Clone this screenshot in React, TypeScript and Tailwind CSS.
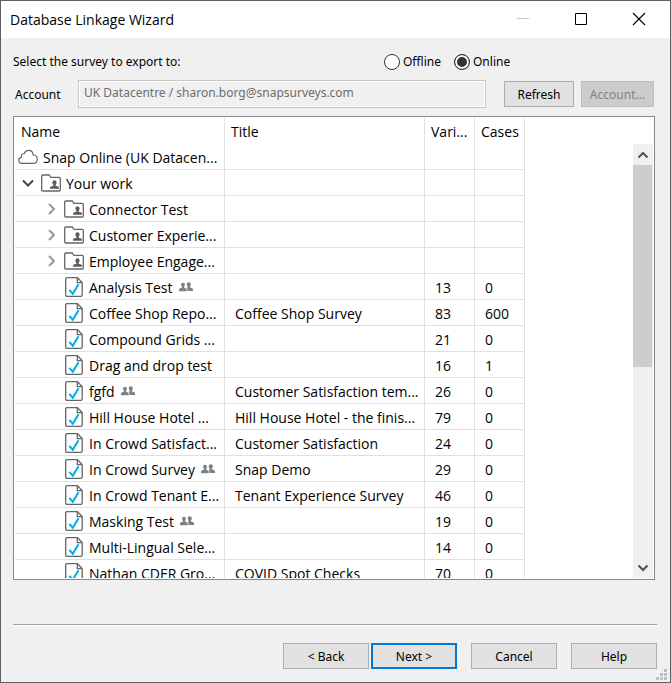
import React, { useState } from "react";

type Kind = "cloud" | "folder" | "survey";

interface Row {
  kind: Kind;
  level: 0 | 1 | 2;
  name: string;
  open?: boolean;
  shared?: boolean;
  title?: string;
  variables?: number;
  cases?: number;
}

const rows: Row[] = [
  { kind: "cloud", level: 0, name: "Snap Online (UK Datacen..." },
  { kind: "folder", level: 1, name: "Your work", open: true },
  { kind: "folder", level: 2, name: "Connector Test" },
  { kind: "folder", level: 2, name: "Customer Experie..." },
  { kind: "folder", level: 2, name: "Employee Engage..." },
  { kind: "survey", level: 2, name: "Analysis Test", shared: true, variables: 13, cases: 0 },
  { kind: "survey", level: 2, name: "Coffee Shop Repo...", title: "Coffee Shop Survey", variables: 83, cases: 600 },
  { kind: "survey", level: 2, name: "Compound Grids ...", variables: 21, cases: 0 },
  { kind: "survey", level: 2, name: "Drag and drop test", variables: 16, cases: 1 },
  { kind: "survey", level: 2, name: "fgfd", shared: true, title: "Customer Satisfaction tem...", variables: 26, cases: 0 },
  { kind: "survey", level: 2, name: "Hill House Hotel ...", title: "Hill House Hotel - the finis...", variables: 79, cases: 0 },
  { kind: "survey", level: 2, name: "In Crowd Satisfact...", title: "Customer Satisfaction", variables: 24, cases: 0 },
  { kind: "survey", level: 2, name: "In Crowd Survey", shared: true, title: "Snap Demo", variables: 29, cases: 0 },
  { kind: "survey", level: 2, name: "In Crowd Tenant E...", title: "Tenant Experience Survey", variables: 46, cases: 0 },
  { kind: "survey", level: 2, name: "Masking Test", shared: true, variables: 19, cases: 0 },
  { kind: "survey", level: 2, name: "Multi-Lingual Sele...", variables: 14, cases: 0 },
  { kind: "survey", level: 2, name: "Nathan CDER Gro...", title: "COVID Spot Checks", variables: 70, cases: 0 },
];

function CloudIcon() {
  return (
    <svg width="20" height="16" viewBox="0 0 20 16" fill="none" stroke="#666" strokeWidth="1.2" className="shrink-0">
      <path d="M4.2 14.4C2 14.4.7 13 .7 11.3c0-1.600 1.200-2.800 2.700-3C3 5.900 4.500 4.300 6.300 4.500 7 2.500 8.600 1.300 10.500 1.300c2.600 0 4.500 1.900 4.600 4.700 2.500.1 4.200 1.900 4.200 4.200 0 2.400-1.800 4.200-4.200 4.200z" />
    </svg>
  );
}

function FolderIcon() {
  return (
    <svg width="20" height="18" viewBox="0 0 20 18" className="shrink-0">
      <path d="M.7 15.800V2.200Q.7 1 1.900 1h6.400l1.500 2.300h8.300q1.200 0 1.200 1.200v11.300q0 1.200-1.200 1.200H1.900Q.7 17 .7 15.800z" fill="#fff" stroke="#666" strokeWidth="1.3" />
      <path d="M13.500 6.300c1.300 0 2.100 1 2.100 2.300 0 1-.4 1.800-1 2.300v.9l2.500.8c.6.2.9.6.9 1.200v1H9v-1c0-.6.3-1 .9-1.200l2.500-.8v-.9c-.6-.5-1-1.300-1-2.300 0-1.300.8-2.300 2.100-2.300z" fill="#5c5c5c" />
    </svg>
  );
}

function SurveyIcon() {
  return (
    <svg width="18" height="20" viewBox="0 0 18 20" fill="none" className="shrink-0">
      <path d="M2 .7h10.500l4.700 4.800V18q0 1.300-1.300 1.300H2Q.7 19.300.7 18V2Q.7.7 2 .7z" fill="#fff" stroke="#666" strokeWidth="1.300" />
      <path d="M12.300 1v4.700H17" stroke="#666" strokeWidth="1.300" />
      <path d="M4.300 12.800l3.500 4 5.700-9.600" stroke="#00aee6" strokeWidth="2" />
    </svg>
  );
}

function PeopleIcon() {
  return (
    <svg width="14" height="10" viewBox="0 0 14 10" fill="#7b8286" className="shrink-0">
      <path d="M9.800.3c1.300 0 2 .9 2 2.100 0 .9-.4 1.700-1 2.100v.8l2.400.9c.5.200.8.600.8 1.100V9H8.400V7.300c0-.6-.3-1-.9-1.400l1.300-.6v-.8c-.6-.4-1-1.200-1-2.100 0-1.200.7-2.100 2-2.100z" />
      <path d="M4 .8c1.200 0 1.900.9 1.900 2 0 .9-.4 1.600-.9 2v.8l2 .8c.5.200.7.500.7 1V9.300H0V7.400c0-.5.300-.8.800-1L3 5.600v-.8c-.6-.4-.9-1.100-.9-2C2.100 1.700 2.800.8 4 .8z" />
    </svg>
  );
}

function Chevron({ d }: { d: string }) {
  return (
    <svg width="12" height="12" viewBox="0 0 12 12" fill="none" stroke="currentColor" strokeWidth="2" className="block">
      <path d={d} />
    </svg>
  );
}

function NameCell({ row }: { row: Row }) {
  const indent = row.level === 0 ? "pl-[3px]" : row.level === 1 ? "pl-[7px]" : "pl-[30px]";
  return (
    <div className={`flex h-[25px] items-center whitespace-nowrap ${indent}`}>
      {row.kind === "folder" && (
        <button
          type="button"
          aria-label={`${row.open ? "Collapse" : "Expand"} ${row.name}`}
          className={row.open ? "mr-[7px] text-[#444]" : "mr-[7px] text-[#999]"}
        >
          <Chevron d={row.open ? "M1 3.500l5 5 5-5" : "M4 1l5 5-5 5"} />
        </button>
      )}
      {row.kind === "survey" && <span className="w-5 shrink-0" />}
      {row.kind === "cloud" && <CloudIcon />}
      {row.kind === "folder" && <FolderIcon />}
      {row.kind === "survey" && <SurveyIcon />}
      <span className={row.kind === "survey" ? "pt-0.5 pl-1.5" : "pt-0.5 pl-[5px]"}>{row.name}</span>
      {row.shared && (
        <span className="pl-1.5">
          <PeopleIcon />
        </span>
      )}
    </div>
  );
}

const header = "h-[26px] border-r border-[#e0e0e0] p-0 pt-0.5 pl-1.5 text-left font-normal whitespace-nowrap";
const cell = "h-[26px] border-r border-b border-[#e0e0e0] p-0 pt-0.5 pl-2.5 whitespace-nowrap";
const button = "h-[26px] border border-[#adadad] bg-[#e1e1e1] pt-0.5 text-center";

export default function App() {
  const [mode, setMode] = useState<"offline" | "online">("online");
  const radio =
    "size-4 appearance-none rounded-full border border-[#333] bg-white checked:bg-[#333] checked:shadow-[inset_0_0_0_2px_white]";

  return (
    <div className="flex h-screen flex-col border border-[#5f5f5f] bg-[#f0f0f0] font-['Noto_Sans',sans-serif] text-[12px] leading-4 text-black">
      <header className="flex h-[37px] shrink-0 items-center justify-between bg-white pl-[9px]">
        <h1 className="font-['Open_Sans',sans-serif] text-[14px] leading-5">Database Linkage Wizard</h1>
        <div className="flex h-full items-center gap-[34px] pr-[19px] pb-0.5">
          <button type="button" aria-label="Minimize" disabled className="size-6">
            <svg width="24" height="24" viewBox="0 0 24 24" className="block">
              <path d="M6 11.500h12" stroke="#c8c8c8" />
            </svg>
          </button>
          <button type="button" aria-label="Maximize" className="size-6">
            <svg width="24" height="24" viewBox="0 0 24 24" className="block">
              <path d="M6.500 6.500h11v11h-11z" stroke="#000" fill="none" />
            </svg>
          </button>
          <button type="button" aria-label="Close" className="size-6">
            <svg width="24" height="24" viewBox="0 0 24 24" className="block">
              <path d="M6 6l12 12M18 6L6 18" stroke="#000" strokeWidth="1.100" />
            </svg>
          </button>
        </div>
      </header>

      <main className="flex min-h-0 flex-1 flex-col pr-[15px] pl-3">
        <fieldset className="shrink-0">
          <div className="flex h-[42px] items-center pt-1.5">
            <div className="w-[371px]">Select the survey to export to:</div>
            <label className="flex w-[70px] items-center gap-[3px]">
              <input type="radio" name="mode" className={radio} checked={mode === "offline"} onChange={() => setMode("offline")} />
              Offline
            </label>
            <label className="flex items-center gap-[3px]">
              <input type="radio" name="mode" className={radio} checked={mode === "online"} onChange={() => setMode("online")} />
              Online
            </label>
          </div>
        </fieldset>

        <div className="flex h-7 shrink-0 items-center pr-px">
          <label htmlFor="account" className="w-[65px] pt-0.5 pl-0.5">
            Account
          </label>
          <input
            id="account"
            type="text"
            disabled
            defaultValue="UK Datacentre / sharon.borg@snapsurveys.com"
            className="h-7 min-w-0 flex-1 border border-[#c8c8c8] bg-[#f0f0f0] px-[5px] pb-1 text-[#6d6d6d] shadow-[inset_0_0_0_1px_white]"
          />
          <button type="button" className={`${button} ml-[18px] w-[70px]`}>
            Refresh
          </button>
          <button type="button" disabled className="ml-[7px] h-[26px] w-[73px] border border-[#bfbfbf] bg-[#ccc] pt-0.5 text-center text-[#838383]">
            Account...
          </button>
        </div>

        <div className="mt-2 flex min-h-0 flex-1 border border-[#828790] bg-white p-px font-['Open_Sans',sans-serif] text-[14px] leading-5">
          <div className="min-w-0 flex-1 overflow-hidden">
            <table className="w-[510px] table-fixed border-separate border-spacing-0">
              <colgroup>
                <col className="w-[210px]" />
                <col className="w-[200px]" />
                <col className="w-[50px]" />
                <col className="w-[50px]" />
              </colgroup>
              <thead>
                <tr>
                  <th className={header}>Name</th>
                  <th className={header}>Title</th>
                  <th className={header}>Vari...</th>
                  <th className={header}>Cases</th>
                </tr>
              </thead>
              <tbody>
                {rows.map((row) => (
                  <tr key={row.name}>
                    <td className="h-[26px] border-r border-b border-[#e0e0e0] p-0">
                      <NameCell row={row} />
                    </td>
                    <td className={cell}>{row.title}</td>
                    <td className={cell}>{row.variables}</td>
                    <td className={cell}>{row.cases}</td>
                  </tr>
                ))}
              </tbody>
            </table>
          </div>
          <div className="mt-[26px] flex w-5 shrink-0 flex-col bg-[#f0f0f0] text-[#505050]">
            <button type="button" aria-label="Scroll up" className="flex h-[21px] items-center justify-center">
              <Chevron d="M1.500 8.500L6 4l4.500 4.500" />
            </button>
            <div className="flex-1">
              <div className="h-[52%] max-h-[202px] w-[19px] bg-[#cdcdcd]" />
            </div>
            <button type="button" aria-label="Scroll down" className="flex h-[21px] items-center justify-center">
              <Chevron d="M1.500 3.500L6 8l4.500-4.500" />
            </button>
          </div>
        </div>
      </main>

      <footer className="relative mt-11 shrink-0 pr-[13px] pb-[13px] pl-3">
        <hr className="h-0.5 border-t border-b border-t-[#a0a0a0] border-b-white" />
        <div className="mt-[17px] flex justify-end">
          <button type="button" className={`${button} w-[86px]`}>
            &lt; Back
          </button>
          <button type="button" className="ml-0.5 h-[26px] w-[86px] border-2 border-[#0078d7] bg-[#e1e1e1] pt-0.5 text-center">
            Next &gt;
          </button>
          <button type="button" className={`${button} ml-3.5 w-[86px]`}>
            Cancel
          </button>
          <button type="button" className={`${button} ml-3.5 w-[86px]`}>
            Help
          </button>
        </div>
        <svg width="11" height="11" viewBox="0 0 11 11" fill="#bfbfbf" className="absolute right-[3px] bottom-0.5">
          <path d="M8 0h3v3H8zM4 4h3v3H4zM8 4h3v3H8zM0 8h3v3H0zM4 8h3v3H4zM8 8h3v3H8z" />
        </svg>
      </footer>
    </div>
  );
}
